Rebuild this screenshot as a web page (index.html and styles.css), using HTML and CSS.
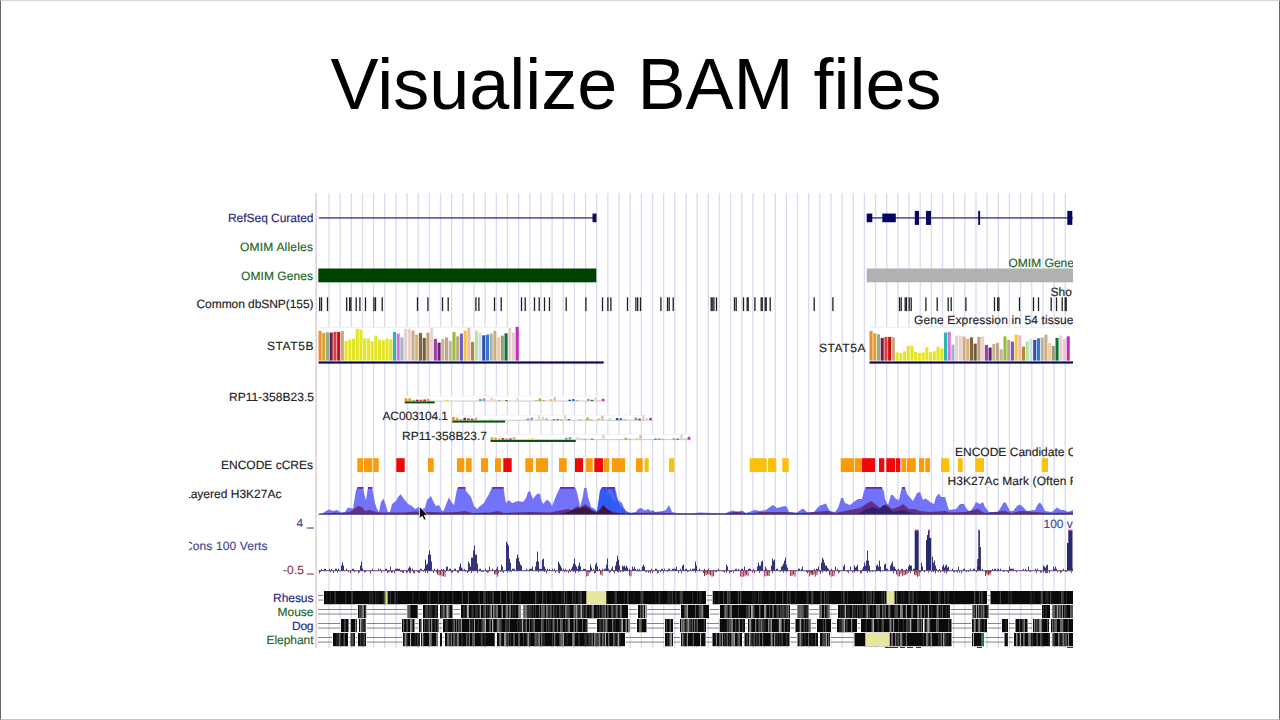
FILE: index.html
```
<!DOCTYPE html>
<html lang="en">
  <head>
    <meta charset="UTF-8" />
    <meta name="viewport" content="width=device-width, initial-scale=1.0" />
    <title>Visualize BAM files</title>
    <link rel="stylesheet" href="styles.css">
  </head>
  <body>
    <main class="slide">
      <h1 class="title">Visualize BAM files</h1>
      <svg class="browser" viewBox="189 193 884 455" role="img">
        <g id="grid"></g>
        <g id="genes"></g>
        <g id="snps"></g>
        <g id="expression"></g>
        <g id="ccres"></g>
        <g id="h3k27ac"></g>
        <g id="cons"></g>
        <g id="align"></g>
        <g class="labels">
          <text class="navy" x="228" y="222" textLength="85.5">RefSeq Curated</text>
          <text class="green" x="240" y="251" textLength="73">OMIM Alleles</text>
          <text class="green" x="241" y="279.7" textLength="72">OMIM Genes</text>
          <text x="196.5" y="308.3" textLength="117">Common dbSNP(155)</text>
          <text x="267" y="350" textLength="46.5">STAT5B</text>
          <text x="229" y="400.5" textLength="85">RP11-358B23.5</text>
          <text x="382.5" y="420" textLength="65.5">AC003104.1</text>
          <text x="402" y="439.5" textLength="85">RP11-358B23.7</text>
          <text x="221" y="469" textLength="92">ENCODE cCREs</text>
          <text x="184" y="498" textLength="97.5">Layered H3K27Ac</text>
          <text class="blue" x="296.5" y="527">4</text>
          <text class="blue" x="307" y="525.7">_</text>
          <text class="blue" x="184" y="550" textLength="83.5">Cons 100 Verts</text>
          <text class="red" x="283" y="573.5" textLength="21">-0.5</text>
          <text class="red" x="307" y="572.3">_</text>
          <text class="navy" x="273" y="602" textLength="40.5">Rhesus</text>
          <text class="green" x="277.5" y="616" textLength="36">Mouse</text>
          <text class="navy" x="292" y="630" textLength="21.5">Dog</text>
          <text class="green" x="266.5" y="644" textLength="47">Elephant</text>
          <text class="green" x="1008.5" y="266.5" textLength="65.5">OMIM Gene</text>
          <text x="1050.5" y="295.5">Sho</text>
          <text x="914" y="324.3" textLength="159.5">Gene Expression in 54 tissue</text>
          <text x="819" y="352" textLength="46.5">STAT5A</text>
          <text x="955" y="456" textLength="121.5">ENCODE Candidate C</text>
          <text x="947.5" y="485" textLength="131">H3K27Ac Mark (Often R</text>
          <text class="blue" x="1043.5" y="527.7">100 vert</text>
        </g>
        <path class="cursor" d="M419.5 506.5v12l2.7-2.4 1.9 4 1.9-.9-1.9-3.9h3.6z" />
      </svg>
    </main>
    <script src="script.js"></script>
  </body>
</html>
```
FILE: styles.css
```
* {
  margin: 0;
  padding: 0;
  box-sizing: border-box;
}

body {
  background: #fff;
  font-family: "Liberation Sans", Arial, sans-serif;
}

.slide {
  display: flex;
  flex-direction: column;
  width: 1280px;
  height: 720px;
  overflow: hidden;
  border: 1px solid #666;
  border-top-color: #d8d8d8;
  border-bottom-color: #c4c4c4;
}

.title {
  height: 192px;
  padding: 42px 8px 0 0;
  text-align: center;
  font-size: 72px;
  font-weight: normal;
  line-height: 82px;
  color: #000;
}

.browser {
  width: 884px;
  height: 455px;
  margin-left: 188px;
  overflow: hidden;
}

.labels {
  font-size: 12px;
  fill: #222;
  stroke: #222;
  stroke-width: 0.15;
  text-rendering: geometricPrecision;
}

.labels .navy {
  fill: #26267c;
  stroke: #26267c;
}

.labels .blue {
  fill: #444490;
  stroke: #444490;
}

.labels .green {
  fill: #236423;
  stroke: #236423;
}

.labels .red {
  fill: #8e3a3a;
  stroke: #8e3a3a;
}

.cursor {
  fill: #000;
  stroke: #fff;
  stroke-width: 0.7;
}
```
FILE: script.js
```
const LEFT = 318;
const RIGHT = 1073;
const NAVY = "#0c0c54";

function el(parent, name, attrs) {
  const node = document.createElementNS("http://www.w3.org/2000/svg", name);
  for (const key in attrs) node.setAttribute(key, attrs[key]);
  document.getElementById(parent).appendChild(node);
}

function rect(parent, x, y, width, height, fill) {
  el(parent, "rect", { x, y, width, height, fill });
}

// seeded so that every load draws the same tracks
let seed = 7;
function random() {
  seed = (seed * 16807) % 2147483647;
  return seed / 2147483647;
}

// guide lines
rect("grid", 315.5, 193, 1.2, 455, "#d8c4c4");
for (let x = 329; x < RIGHT; x += 11.155) {
  rect("grid", x - 0.65, 193, 1.3, 455, "#dadaf0");
}

// refseq + omim
rect("genes", 319, 217.2, 274, 1.4, "#3c3c84");
rect("genes", 592.5, 213.5, 4, 8.7, NAVY);
rect("genes", 867, 217.2, 206, 1.4, "#3c3c84");
[
  [866.7, 5.6, 8.7],
  [882.3, 13.5, 8.7],
  [914.8, 4.2, 14],
  [926, 5, 14],
  [978.2, 1.9, 14],
  [1067.3, 5, 14],
].forEach(([x, w, h]) => rect("genes", x, 217.9 - h / 2, w, h, "#060660"));
rect("genes", 318.3, 268.5, 278, 13.8, "#004200");
rect("genes", 866.7, 268.5, 206.3, 13.8, "#b1b1b1");

// common snps
[
  319.5, 321.3, 327.3, 346.5, 349.5, 350.7, 356, 359.7, 365.3, 373.7, 375.3,
  382, 417.3, 427.7, 442.3, 448, 475.7, 478.7, 494.3, 501, 521.3, 525, 534.3,
  539, 544.3, 549.3, 566, 585.7, 602.3, 607.7, 610.7, 627.3, 635.7, 637.5,
  640.3, 660.7, 667.3, 669, 673, 711, 712, 713.7, 716.3, 734.3, 736, 743.3,
  747, 748, 754.7, 761, 762, 765, 766, 770, 814, 832.7, 899.3, 901, 905, 906.3,
  909, 911, 925.7, 937, 948, 951, 965.7, 994.3, 997.5, 998.7, 1019.3, 1033.3,
  1038.3, 1051, 1056.3, 1062, 1065, 1066,
].forEach((x) => rect("snps", x - 0.45, 297.3, 1.3, 13.8, "#202020"));

// expression in 54 tissues
const tissueColors = [
  "#e69138", "#e0a030", "#8fb085", "#71204e", "#d84040", "#cc1010", "#c9a68a",
  ...Array(13).fill("#e4e624"),
  "#2cb5b5", "#ca78dc", "#a0b4c8", "#e8d2d0", "#e8d2d0", "#c8ad88", "#d6b27c",
  "#7c6542", "#705c3c", "#c0a078", "#ead2d2", "#9840a8", "#682078", "#c8b490",
  "#bba88c", "#c4b49c", "#98bc38", "#c0aa8c", "#6c60c4", "#f2c83c", "#f0b8b8",
  "#b4882c", "#b0e4a8", "#d4dce0", "#3050b0", "#3078d0", "#b0b0a4", "#c8ac84",
  "#f4cc98", "#90a088", "#147038", "#e8d0cc", "#e4ccd0", "#c828c0",
];

function expression(x, base, heights, width) {
  rect("expression", x, base - 33.5, Math.min(200.5, RIGHT - x), 33.5, "#fff");
  rect("expression", x, base - 33.7, Math.min(200.5, RIGHT - x), 0.7, "#ece4e8");
  heights.forEach((h, i) =>
    rect("expression", x + i * 3.72, base - h, 3.1, h, tissueColors[i])
  );
  rect("expression", x, base + 0.8, width, 2.2, NAVY);
}

expression(318.5, 360.6, [
  29.7, 27.7, 28.3, 28, 28.7, 28.7, 29.7, 19.7, 21, 22, 31.7, 31, 22.3, 22.3,
  19.3, 25, 21, 20.3, 22.3, 21.3, 28.7, 27, 23.3, 31.7, 31.7, 30, 26, 27.7,
  22.7, 28, 32.3, 21.7, 18, 21.7, 23.3, 19.7, 28.7, 24.3, 27, 30, 32.7, 18.7,
  30, 28, 25.3, 26, 27, 29.7, 23.3, 25, 27.3, 32.7, 28, 33.7,
], 285.2);
expression(869.5, 360.6, [
  29.7, 27.3, 26.3, 22.7, 23.7, 23.7, 23.3, 8.3, 7.7, 9.3, 14.7, 14.7, 8.7,
  7.7, 8.3, 13.3, 8.3, 9.3, 14, 12.3, 28, 28.7, 16, 25, 25, 24, 21.7, 23.3,
  17, 23.7, 24, 15.7, 13, 16.7, 17.7, 11.3, 24.3, 20.7, 19, 26, 25.3, 14,
  19.3, 22, 20.7, 22.3, 23, 26, 17.7, 14.7, 22.7, 25, 22, 24.3,
], 204);

// low expressed genes
function miniExpression(x, base, heights, width) {
  rect("expression", x, base - 5, 200.5, 5, "#fff");
  rect("expression", x, base - 5.2, 200.5, 0.5, "#eee8ea");
  rect("expression", x, base - 0.4, 200.5, 0.9, "#bdc9c0");
  for (const i in heights) {
    rect("expression", x + i * 3.72, base - heights[i], 2.6, heights[i], tissueColors[i]);
  }
  rect("expression", x, base + 0.4, width, 2, "#10500f");
}

miniExpression(404.7, 401, {
  0: 2.8, 1: 2.8, 2: 1, 3: 1.3, 4: 1.3, 5: 1.5, 6: 2.2, 11: 1, 20: 2, 21: 2.7,
  23: 3.5, 24: 1.7, 25: 1, 27: 1, 30: 3.3, 35: 1, 36: 2.7, 37: 1, 39: 2, 40: 4,
  44: 1.3, 45: 2, 46: 1, 49: 2, 50: 1.2, 51: 3.7, 52: 1, 53: 2.2,
}, 30);
miniExpression(452.2, 420.2, {
  0: 3.3, 1: 2.3, 2: 1, 3: 2.4, 4: 2, 5: 1.4, 6: 2.7, 10: 1, 20: 1.7, 21: 2.7,
  23: 5, 24: 3.6, 25: 1.7, 27: 1, 28: 1, 29: 1, 30: 5, 31: 1.2, 34: 1, 36: 2.7,
  37: 1, 39: 1.8, 40: 4.7, 42: 1.8, 44: 2.2, 45: 2, 46: 1, 49: 2.7, 50: 1.6,
  51: 5, 52: 2, 53: 2.4,
}, 52.8);
miniExpression(490.5, 439.6, {
  0: 2.2, 1: 2, 2: 1, 3: 1.4, 4: 1, 5: 1.2, 6: 2.3, 10: 1, 11: 1.8, 20: 1.8,
  21: 2.6, 23: 2.6, 24: 1.8, 25: 1, 27: 1, 30: 5, 36: 1.8, 37: 1, 39: 1.4,
  40: 4.7, 44: 1, 45: 1, 46: 1, 49: 1.5, 50: 1, 51: 5, 52: 1.5, 53: 2.8,
}, 85.2);

// ENCODE cCREs: [start, end]
const ccres = {
  "#fb9b0a": [
    [357.3, 363], [364, 372.3], [373.3, 378.7], [428, 433.7], [457, 464.3],
    [466, 471.7], [481, 488], [495, 501], [525.3, 533], [536, 548],
    [559, 566.7], [586, 592.7], [603.7, 609.3], [612, 625], [636, 642.7],
    [840.7, 854.3], [855, 861.7], [901.3, 906.3], [907, 915.7],
    [919, 924.3], [925.3, 930],
  ],
  "#f00808": [
    [396.3, 404.7], [503.3, 511.7], [575, 583], [594.3, 603], [862, 875],
    [879, 884.3], [886.3, 895], [895.7, 900.3],
  ],
  "#fac00a": [
    [644.7, 648.7], [669, 674.3], [749.7, 766.7], [768, 776.3],
    [782.3, 788.7], [941, 949.3], [958, 962.7], [975.3, 984], [1041.7, 1048],
  ],
};
for (const color in ccres) {
  ccres[color].forEach(([a, b]) => rect("ccres", a, 458.2, b - a, 13.8, color));
}

// layered H3K27Ac
function area(points, fill) {
  el("h3k27ac", "polygon", { points, fill });
}

area(`319,514 323,513 326,511 329,509.5 333,511 337,510 341,512.5 345,512
  348,507.5 350,508 353,508.5 356,490 357.5,487.3 363,487.3 365,497 366,500
  368,487.3 372,487.3 375,503 377,509 379,512 381,502 383.5,498.5 386,506
  388,512.5 390,512 392,504 396,501 398,497 400.7,494.3 404,499 408,504 412,506
  415,509 419,507 422,509 425,508 427,500 431,496 434,503 436,506 439,505
  442,511 444,510 447,502 449,497.5 452,503 454,505 457,489 458,487.3
  465,487.3 466,491 471,497 474,506 477,509 480,506 484,503 489,494 492,487.3
  503.5,487.3 505,498 506,503 509,500 512,503 515,502 518,501 523,502 526,498
  528,492 530,491 531,494 533,499 536,495 538,493.5 540,494 541,499 543,504
  547,499.5 550,502 552,506 556,496 560,487.3 574.5,487.3 576,489 578,496
  580,507 583,496 584,488 586.5,487.8 588,497 591,507 595,509 597,512 600,490
  602,487.3 615,487.3 618,500 622,503 624,508 626,511 631,513 636,512 638,509
  641,508 645,510.5 648,509 651,511 653,510 655,512 663,511 666,510 669,505
  672,512 677,513 690,513.5 700,512.5 725,513.5 728,512 733,510.5 737,512
  742,510.5 746,513 752,511 754,510 760,511 766,510 770,507 773,505 777,508
  785,506 787,507 789,512 796,513 803,508.5 808,513 814,512 819,506 826,503.5
  828,508 830,511 835,512 838,508 840,502 841,498 843,498 845,503 850,505
  855,501 858,499 862,499 864,491 866,487.3 882,487.3 884,492 885,499 888,505
  891,495 893,495 896,499 899,500 901,491 902,487.3 905,487.3 907,494 913,501
  917,493 920,492 923,500 925,498.5 928,500 930,502 934,504 936,497 939,493.5
  941,497 945,497 947,504 949,510 956,509 960,504 964,504 966,508 970,512
  974,506 976,502 978,503 980,504 983,502 985,507 989,512 998,512 1001,507
  1004,502 1006,503 1010,511 1013,511 1017,506 1020,504.5 1023,507 1027,511
  1035,510 1038,504 1040,502.5 1042,505 1045,511 1052,512 1057,507.5 1061,510
  1064,510 1068,512 1073,510 1073,514`, "#7373fa");
area(`578,514 582,509 585,505 588,506 593,510 597,512 600,492 602,487.3 614,487.3
  616,496 619,504 624,509 628,514`, "#315bf5");
area("607,494 609,488.5 613,492 615,499 616,503 613,500 610,494", "#5a68f5");
area(`319,514 335,512.5 340,513 350,512 354,509 358,506 362,507 365,511
  370,510 373,511 378,512.5 405,512.5 415,511.5 430,512 445,512.5 458,512
  465,511 472,513 490,512.5 498,511 504,513 530,512 550,512.5 562,510 568,509
  572,510 577,506 580,508 585,504 589,507 593,511 600,512 603,505 606,508
  611,511 620,513 660,512.5 677,513.4 725,513.4 737,511.5 745,513 752,513.2
  760,512 785,512 800,513 820,511.5 828,511 835,513 850,510 860,508 866,504
  871,501 875,504 880,508 886,504 892,509 898,507 903,504 909,509 914,509
  920,511 930,512 945,511 950,512.5 965,512 978,509 981,511 985,513 1004,511
  1012,513 1020,511 1035,512 1050,513 1073,512.5 1073,514`, "#633088");
area(`560,514 568,512 575,509 580,508 586,507 592,511 597,513 601,508 603,505
  607,509 613,513 626,514`, "#3c1642");
area("858,514 866,509 873,507 879,509 884,505 889,508 893,512 903,510 915,514", "#342072");
[
  [357.5, 6], [368, 4.5], [458, 7.5], [492.5, 11], [560, 14.5], [602, 4],
  [607, 8], [865.5, 16.5], [902, 3],
].forEach(([x, w]) => rect("h3k27ac", x, 487, w, 1.8, "#682abc"));
rect("h3k27ac", 318.5, 513.7, 754.5, 1, "#28265a");

// 100 vertebrates conservation
const ZERO = 570.6;
for (let x = 319; x < RIGHT; x += 1) {
  const r = random();
  if (r > 0.7) {
    const h = r > 0.95 ? 4 : 1 + r;
    rect("cons", x, ZERO - h, 1, h, "#39398a");
  } else if (r < 0.3) {
    rect("cons", x, ZERO + 0.3, 1, 0.7 + random() * 2, "#984050");
  }
}
rect("cons", 318.5, ZERO - 0.4, 754.5, 1, "#5a4878");

// [first x, heights of neighbouring bars]
const peaks = [
  [341, [5, 8, 5]], [360, [5, 9, 2]], [408, [2, 4, 3]],
  [425, [11, 6, 7, 16, 20, 16, 9]], [459, [4, 7, 3]],
  [468, [9, 7, 4, 13, 13, 20, 25, 16, 16, 7]], [501, [6, 4]],
  [506, [29, 27, 25, 12, 8]], [516, [12, 16, 13, 9, 6, 5]],
  [536, [9, 19, 9]], [542, [11, 12, 4]], [558, [9, 7, 5, 3]],
  [572, [4, 7, 12, 6, 4]], [578, [5, 8, 4]], [590, [6, 3]],
  [595, [6, 8, 4]], [606, [6, 12]], [615, [5, 9, 15, 11, 5]],
  [622, [5, 4, 5, 3, 5, 3]], [642, [4, 6, 4]], [682, [5, 6]],
  [695, [9, 5]], [726, [6, 4]], [757, [4, 8, 5, 5, 9, 10]],
  [771, [5, 12, 10, 11]], [781, [4, 5, 7, 10, 13, 6, 3]],
  [821, [8, 13, 11, 8, 5, 5, 3]], [843, [4, 6]], [854, [5, 3, 4, 6]],
  [863, [4, 8, 5, 10, 20, 10, 5]], [876, [5, 6, 4, 10, 4]],
  [884, [6, 7]], [890, [5, 7, 9, 4, 4]], [908, [4, 6, 5, 5]],
  [921, [8, 4]], [932, [14, 8, 10, 5]], [942, [4, 6, 3, 5, 6, 3, 4]],
  [1043, [5, 4, 3, 5, 6]],
];
peaks.forEach(([x, hs]) =>
  hs.forEach((h, i) => rect("cons", x + i, ZERO - h, 1, h, "#34347c"))
);
el("cons", "path", {
  fill: "#28286c",
  d: `M914.7 570V531h4v39z M926 570v-30h1v-5h1v-4h1.6v7h1.6v32z
    M977.3 570v-11h1V531h1.6v16h1v23z M1067 570v-27h1.3v-12h4.2v39z`,
});
[[914.7, 4], [928, 2], [978.2, 1.8], [1068, 4.5]].forEach(([x, w]) =>
  rect("cons", x, 529.7, w, 1.6, "#c030b0")
);
[
  [437, 445], [494, 498], [586, 588], [600, 603], [629, 631], [704, 714],
  [740, 748], [764, 769], [790, 795], [809, 817], [829, 834], [896, 907],
  [914, 919], [985, 991],
].forEach(([a, b]) => {
  for (let x = a; x < b; x += 1.5) {
    const h = 3.5 + random() * 3;
    rect("cons", x, ZERO, 1.1, h, h > 5.5 ? "#b64070" : "#8c3038");
  }
});

// pairwise alignments
const greys = ["#343434", "#484848", "#686868", "#828282", "#acacac"];
const darkGreys = ["#202020", "#2c2c2c", "#3c3c3c", "#505050"];
const species = [
  {
    y: 591,
    light: 0.24,
    shades: darkGreys,
    blocks: [[324, 706], [712.7, 987], [990.5, 1073]],
  },
  {
    y: 605,
    light: 0.56,
    shades: greys,
    blocks: [
      [358, 366], [407.5, 417.7], [423, 438], [440, 452.5], [461, 521],
      [523.5, 628], [638, 646.5], [681, 709], [720, 790], [797.5, 808.5],
      [819.5, 829.5], [838, 950], [972.5, 988.5], [1042, 1050], [1052.5, 1073],
    ],
  },
  {
    y: 619,
    light: 0.42,
    shades: greys,
    blocks: [
      [341, 348.5], [350.7, 357], [359, 366], [402, 414.5], [419, 421.5],
      [423, 438.5], [443, 587.5], [597, 629.5], [637, 646.5], [665, 673],
      [680, 706], [719.7, 745], [748, 790], [795.5, 810.5], [817, 831],
      [837, 857], [861, 923], [924.5, 951.5], [972, 987], [1002, 1008],
      [1015.5, 1027.5], [1033, 1049], [1051, 1073],
    ],
  },
  {
    y: 633,
    light: 0.44,
    shades: greys,
    blocks: [
      [333, 348], [350.5, 355], [358, 366], [403, 420], [421, 438],
      [440, 442], [445, 495], [497, 625], [665, 673], [681, 705.5],
      [712.5, 742], [744.5, 789.5], [797.5, 818], [820, 830], [854.5, 951.5],
      [972, 984], [1004.5, 1008], [1014, 1050], [1052.5, 1073],
    ],
  },
];

species.forEach(({ y, light, shades, blocks }) => {
  rect("align", LEFT, y + 4, RIGHT - LEFT, 0.9, "#787878");
  rect("align", LEFT, y + 8.6, RIGHT - LEFT, 0.9, "#787878");
  blocks.forEach(([a, b]) => {
    rect("align", a - 0.7, y - 0.5, b - a + 1.4, 14, "#fff");
    rect("align", a, y, b - a, 13.2, "#0a0a0a");
    for (let x = a + 1; x < b - 1; x += 1.2) {
      if (random() < light) {
        const shade = shades[Math.floor(random() * shades.length)];
        rect("align", x, y, 0.8 + random() * 0.5, 13.2, shade);
      }
    }
  });
});
rect("align", 385.3, 591, 2.4, 13, "#d8dc70");
rect("align", 586.3, 591, 20, 13, "#e6e69e");
rect("align", 886.5, 591, 8, 13, "#e6e69e");
rect("align", 865.3, 633, 24.5, 13, "#e6e69e");
rect("align", 982.3, 633, 1.1, 13, "#249434");
[[885, 13], [900, 5], [907, 6], [916, 5], [977, 5], [1067, 6]].forEach(([x, w]) =>
  rect("align", x, 647, w, 1, "#333")
);
```
